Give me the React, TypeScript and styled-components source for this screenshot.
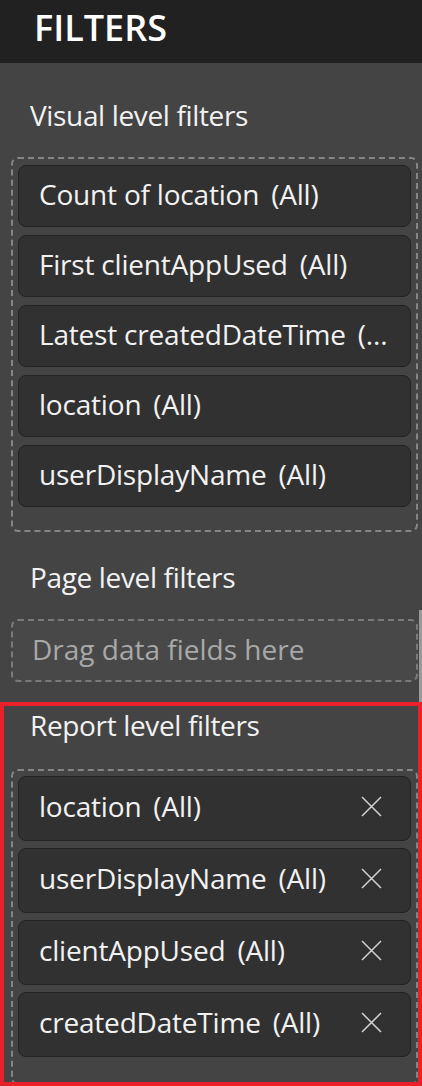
import React from "react";
import styled, { createGlobalStyle } from "styled-components";

const GlobalStyle = createGlobalStyle`
  html, body {
    margin: 0;
    padding: 0;
    background: #444444;
  }
  body {
    font-family: "Open Sans", "Noto Sans", "Liberation Sans", sans-serif;
    -webkit-font-smoothing: antialiased;
  }
`;

// Whole filters pane
const Pane = styled.aside`
  position: relative;
  width: 422px;
  height: 1086px;
  overflow: hidden;
  background: #444444;
  color: #f2f2f2;
  display: flex;
  flex-direction: column;
`;

const Header = styled.header`
  height: 63px;
  flex-shrink: 0;
  box-sizing: border-box;
  padding: 0 0 8px 34px;
  background: #212121;
  display: flex;
  align-items: center;
  font-size: 36px;
  font-weight: 600;
  color: #ffffff;
`;

// Each filter level; the highlighted one gets the red annotation frame
const Section = styled.section<{ $top: number; $highlight?: boolean }>`
  position: relative;
  margin-top: ${(p) => (p.$highlight ? p.$top - 5 : 0)}px;
  padding: ${(p) => (p.$highlight ? 5 : p.$top)}px 4px 0 11px;
  ${(p) =>
    p.$highlight &&
    `
    flex: 1;
    &::after {
      content: "";
      position: absolute;
      inset: 2px 0 0 0;
      border: 4px solid #e8202a;
      pointer-events: none;
    }
  `}
`;

const SectionTitle = styled.h2<{ $gap: number }>`
  margin: 0 0 ${(p) => p.$gap}px 0;
  padding-left: 19px;
  font-size: 28px;
  line-height: 40px;
  font-weight: 400;
  letter-spacing: -0.35px;
`;

const DropZone = styled.div<{ $gap?: number; $padTop?: number; $padBottom?: number }>`
  box-sizing: border-box;
  border: 2px dashed #858585;
  border-radius: 7px;
  display: flex;
  flex-direction: column;
  gap: ${(p) => p.$gap ?? 8}px;
  padding: ${(p) => p.$padTop ?? 6}px 5px ${(p) => p.$padBottom ?? 23}px 5px;
`;

const EmptyZone = styled.div`
  box-sizing: border-box;
  height: 63px;
  border: 2px dashed #7a7a7a;
  border-radius: 7px;
  background: #484848;
  display: flex;
  align-items: center;
  padding: 0 0 4px 19px;
  font-size: 28px;
  color: #a8a8a8;
`;

const FilterCard = styled.div<{ $height: number }>`
  box-sizing: border-box;
  height: ${(p) => p.$height}px;
  border: 1px solid #222222;
  border-radius: 8px;
  background: #313131;
  display: flex;
  align-items: center;
  padding: 0 28px 5px 20px;
  font-size: 28px;
  letter-spacing: -0.2px;
  white-space: nowrap;
`;

const FieldName = styled.span`
  flex-shrink: 0;
`;

const FieldValue = styled.span`
  flex-shrink: 0;
  margin-left: 12px;
`;

const RemoveButton = styled.button`
  margin-left: auto;
  padding: 0;
  border: none;
  background: none;
  display: flex;
  cursor: pointer;
`;

const ScrollThumb = styled.div`
  position: absolute;
  right: 0;
  top: 610px;
  width: 3px;
  height: 100px;
  background: #9a9a9a;
`;

const CloseIcon = () => (
  <svg width="21" height="21" viewBox="0 0 21 21">
    <path d="M1 1 L20 20 M20 1 L1 20" stroke="#d2d2d2" strokeWidth="1.5" fill="none" />
  </svg>
);

const visualFilters = [
  { name: "Count of location", value: "(All)" },
  { name: "First clientAppUsed", value: "(All)" },
  { name: "Latest createdDateTime", value: "(..." },
  { name: "location", value: "(All)" },
  { name: "userDisplayName", value: "(All)" },
];

const reportFilters = [
  { name: "location", value: "(All)" },
  { name: "userDisplayName", value: "(All)" },
  { name: "clientAppUsed", value: "(All)" },
  { name: "createdDateTime", value: "(All)" },
];

export default function App() {
  return (
    <>
      <GlobalStyle />
      <Pane>
        <Header>FILTERS</Header>

        <Section $top={32}>
          <SectionTitle $gap={22}>Visual level filters</SectionTitle>
          <DropZone>
            {visualFilters.map((f) => (
              <FilterCard key={f.name} $height={62}>
                <FieldName>{f.name}</FieldName>
                <FieldValue>{f.value}</FieldValue>
              </FilterCard>
            ))}
          </DropZone>
        </Section>

        <Section $top={25}>
          <SectionTitle $gap={22}>Page level filters</SectionTitle>
          <EmptyZone>Drag data fields here</EmptyZone>
        </Section>

        <ScrollThumb />

        <Section $top={23} $highlight>
          <SectionTitle $gap={24}>Report level filters</SectionTitle>
          <DropZone $gap={7} $padTop={5} $padBottom={26}>
            {reportFilters.map((f) => (
              <FilterCard key={f.name} $height={65}>
                <FieldName>{f.name}</FieldName>
                <FieldValue>{f.value}</FieldValue>
                <RemoveButton aria-label={`Remove ${f.name}`}>
                  <CloseIcon />
                </RemoveButton>
              </FilterCard>
            ))}
          </DropZone>
        </Section>
      </Pane>
    </>
  );
}
